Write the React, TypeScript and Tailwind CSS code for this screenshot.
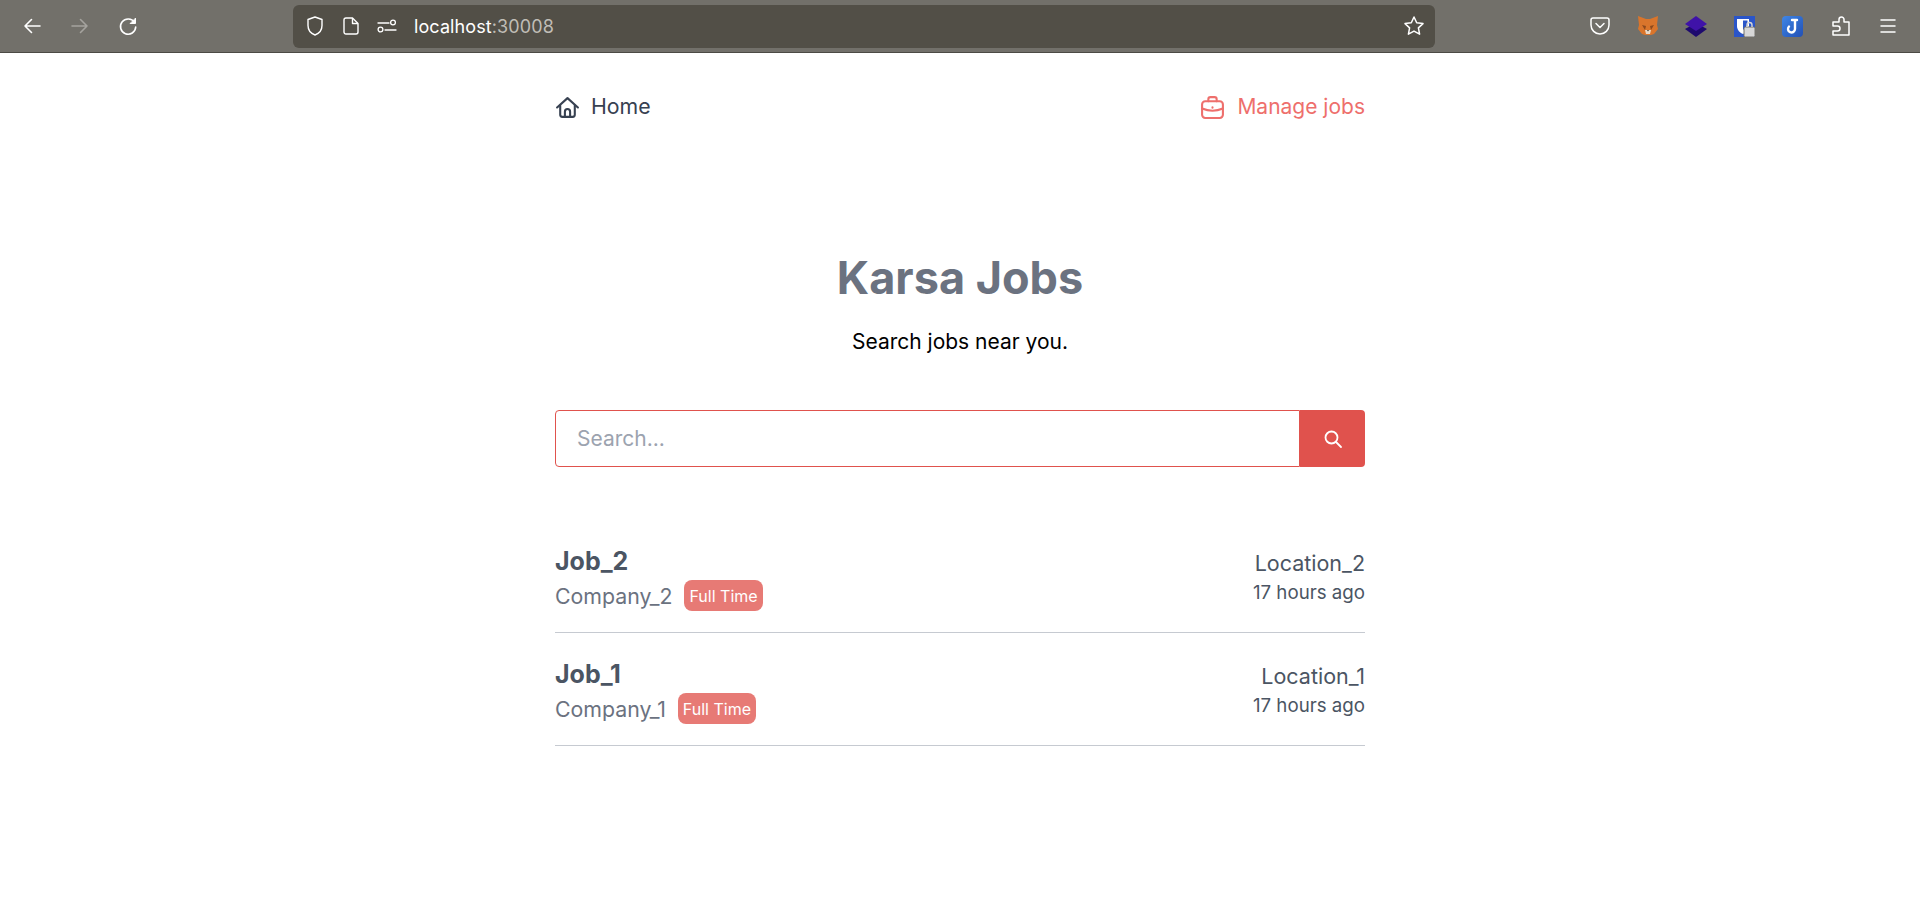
function BrowserBar() {
  return (
    <div className="h-[53px] bg-[#72706a] border-b border-[#4b4a44] flex items-center text-white">
      <div className="w-[293px] flex items-center pl-[22px] gap-[28px]">
        <svg width="20" height="20" viewBox="0 0 20 20" fill="none" stroke="currentColor" strokeWidth="1.6" strokeLinecap="round" strokeLinejoin="round">
          <path d="M18 10H3M9.5 3.5 3 10l6.5 6.5" />
        </svg>
        <svg width="20" height="20" viewBox="0 0 20 20" fill="none" stroke="#a5a39e" strokeWidth="1.6" strokeLinecap="round" strokeLinejoin="round">
          <path d="M2 10h15M10.5 3.500 17 10l-6.500 6.500" />
        </svg>
        <svg width="20" height="20" viewBox="0 0 20 20" fill="none" stroke="currentColor" strokeWidth="1.6" strokeLinecap="round" strokeLinejoin="round">
          <path d="M16.500 6.500A7.600 7.600 0 1 0 17.700 11" />
          <path d="M17.500 2.500v5h-5z" fill="currentColor" strokeWidth="1" />
        </svg>
      </div>
      <div className="w-[1142px] h-[43px] bg-[#524f47] rounded-md flex items-center pl-[12px] pr-[10px]">
        <svg width="20" height="22" viewBox="0 0 20 22" fill="none" stroke="currentColor" strokeWidth="1.4" strokeLinejoin="round">
          <path d="M10 2 3 4.500v6c0 4.500 3 8 7 9.500 4-1.500 7-5 7-9.500v-6z" />
        </svg>
        <svg className="ml-[18px]" width="16" height="20" viewBox="0 0 16 20" fill="none" stroke="currentColor" strokeWidth="1.4" strokeLinejoin="round">
          <path d="M3 2h6.500L15 7.500V16a2 2 0 0 1-2 2H3a2 2 0 0 1-2-2V4a2 2 0 0 1 2-2z" />
          <path d="M9.500 2v5.500H15" />
        </svg>
        <svg className="ml-[18px]" width="20" height="14" viewBox="0 0 20 14" fill="none" stroke="currentColor" strokeWidth="1.3" strokeLinecap="round">
          <path d="M1 4h11M8 11h11" />
          <circle cx="16" cy="3.500" r="2.400" />
          <circle cx="3.500" cy="10.500" r="2.400" />
        </svg>
        <span className="ml-[17px] text-[18px] tracking-[0.1px]">
          localhost<span className="text-[#c0bdb6]">:30008</span>
        </span>
        <svg className="ml-auto" width="22" height="22" viewBox="0 0 22 22" fill="none" stroke="currentColor" strokeWidth="1.5" strokeLinejoin="round">
          <path d="m11 2 2.700 5.800 6.300.8-4.600 4.300 1.200 6.300L11 16.100l-5.600 3.100 1.200-6.300L2 8.600l6.300-.8z" />
        </svg>
      </div>
      <div className="flex-1 flex items-center pl-[155px]">
        <svg width="20" height="20" viewBox="0 0 20 20" fill="none" stroke="currentColor" strokeWidth="1.5" strokeLinecap="round" strokeLinejoin="round">
          <path d="M3 2h14a2 2 0 0 1 2 2v5a9 9 0 0 1-18 0V4a2 2 0 0 1 2-2z" />
          <path d="m6 7.500 4 4 4-4" />
        </svg>
        <svg className="ml-[27px]" width="22" height="22" viewBox="0 0 22 22">
          <path d="M1 1l8 3h4l8-3-1 9 1 4-4 5-3 1h-6l-3-1-4-5 1-4z" fill="#d9752c" />
          <path d="M5 10l4 1-1 4zM17 10l-4 1 1 4z" fill="#8c4a1e" />
          <path d="M8 15h6l-1 4H9z" fill="#e8d9c8" />
          <path d="M10 15h2l-1 1.500z" fill="#333" />
        </svg>
        <svg className="ml-[26px]" width="22" height="22" viewBox="0 0 22 22">
          <path d="M11 8 22 14 11 22 0 14z" fill="#1e0a6e" />
          <path d="M11 1 22 9 11 16 0 9z" fill="#3f12a8" />
        </svg>
        <div className="ml-[27px] relative w-[21px] h-[21px] bg-[#2a55c9]">
          <svg width="21" height="21" viewBox="0 0 21 21">
            <path d="M3 3h12v7c0 4-3 7-6 8-3-1-6-4-6-8z" fill="#fff" />
            <path d="M9 4.500h4.500v5L9 14z" fill="#2a55c9" />
            <rect x="10" y="11" width="11" height="10" rx="1.500" fill="#d7d7d7" stroke="#72706a" />
            <path d="M13 11V9a2.500 2.500 0 0 1 5 0v2" fill="none" stroke="#d7d7d7" strokeWidth="1.400" />
          </svg>
        </div>
        <div className="ml-[27px] w-[21px] h-[21px] rounded-[4px] bg-gradient-to-br from-[#3f86e6] to-[#2350b5] flex items-center justify-center">
          <svg width="15" height="17" viewBox="0 0 15 17" fill="none" stroke="#fff" strokeWidth="2.400" strokeLinecap="round">
            <path d="M7 2h5M10 2v9a3.500 3.500 0 1 1-6-2.500" />
          </svg>
        </div>
        <svg className="ml-[28px]" width="20" height="21" viewBox="0 0 20 21" fill="none" stroke="currentColor" strokeWidth="1.500" strokeLinejoin="round">
          <path d="M8 6V3.500a2.500 2.500 0 0 1 5 0V6h5v13H2v-4h4.500a2 2 0 0 0 0-5H2V6z" />
        </svg>
        <svg className="ml-[28px]" width="18" height="16" viewBox="0 0 18 16" fill="none" stroke="currentColor" strokeWidth="1.500" strokeLinecap="round">
          <path d="M2 2h14M2 8h14M2 14h14" />
        </svg>
      </div>
    </div>
  );
}

function HomeIcon() {
  return (
    <svg width="25" height="25" viewBox="0 0 24 24" fill="none" stroke="currentColor" strokeWidth="2" strokeLinecap="round" strokeLinejoin="round">
      <path d="M2 12 12 3l10 9" />
      <path d="M5 10v9a2 2 0 0 0 2 2h10a2 2 0 0 0 2-2v-9" />
      <path d="M9.500 21v-5a2.500 2.500 0 0 1 5 0v5" />
    </svg>
  );
}

function BriefcaseIcon() {
  return (
    <svg width="25" height="25" viewBox="0 0 24 24" fill="none" stroke="currentColor" strokeWidth="2" strokeLinecap="round" strokeLinejoin="round">
      <rect x="2" y="6" width="20" height="16" rx="3" />
      <path d="M8 6V4a2 2 0 0 1 2-2h4a2 2 0 0 1 2 2v2" />
      <path d="M2 13c6 2.500 14 2.500 20 0" />
      <path d="M12 11.800v.4" />
    </svg>
  );
}

function SearchIcon() {
  return (
    <svg width="20" height="20" viewBox="0 0 20 20" fill="none" stroke="currentColor" strokeWidth="1.800" strokeLinecap="round">
      <circle cx="8.500" cy="8.500" r="6" />
      <path d="m13 13 5 5" />
    </svg>
  );
}

function JobRow({ title, company, location }: { title: string; company: string; location: string }) {
  return (
    <div className="h-[113px] border-b border-[#c6cad1] flex justify-between items-start pt-[24px]">
      <div>
        <div className="text-[25px] leading-[35px] font-bold text-[#4b5563]">{title}</div>
        <div className="flex items-center mt-[1px]">
          <span className="text-[21.3px] leading-[30px] text-[#6b7280]">{company}</span>
          <span className="ml-[12px] h-[31px] px-[5px] flex items-center rounded-lg bg-[#e77a75] text-white text-[16px]">Full Time</span>
        </div>
      </div>
      <div className="text-right pt-[4px]">
        <div className="text-[21.5px] leading-[30px] text-[#4b5563]">{location}</div>
        <div className="text-[18.7px] leading-[25px] text-[#4b5563] mt-[2px]">17 hours ago</div>
      </div>
    </div>
  );
}

export default function App() {
  return (
    <div className="min-h-[916px] bg-white font-['Inter',sans-serif] [font-optical-sizing:none]">
      <BrowserBar />
      <div className="w-[810px] mx-auto">
        <nav className="flex justify-between items-center h-[108px]">
          <a className="flex items-center gap-[11px] text-[21.3px] text-[#374151]">
            <HomeIcon />
            Home
          </a>
          <a className="flex items-center gap-[12px] text-[21px] text-[#ee6f6c]">
            <BriefcaseIcon />
            Manage jobs
          </a>
        </nav>
        <h1 className="mt-[89px] text-center text-[45px] leading-[56px] font-bold text-[#6b7280]">Karsa Jobs</h1>
        <p className="mt-[22px] text-center text-[21px] leading-[28px] text-black">Search jobs near you.</p>
        <div className="mt-[54px] flex h-[57px]">
          <div className="flex-1 border border-[#e0524d] rounded-l flex items-center pl-[21px] text-[21px] text-[#9ca3af]">Search...</div>
          <button className="w-[65px] bg-[#e0524d] rounded-r flex items-center justify-center text-white">
            <SearchIcon />
          </button>
        </div>
        <div className="mt-[53px]">
          <JobRow title="Job_2" company="Company_2" location="Location_2" />
          <JobRow title="Job_1" company="Company_1" location="Location_1" />
        </div>
      </div>
    </div>
  );
}
